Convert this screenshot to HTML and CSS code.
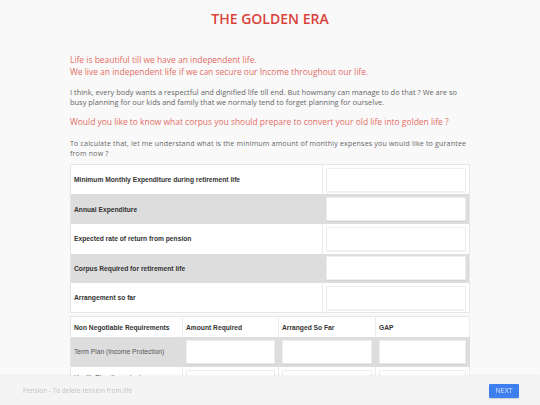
FILE: index.html
```html
<!DOCTYPE html>
<html lang="en">
<head>
<meta charset="utf-8">
<title>The Golden Era</title>
<link rel="stylesheet" href="styles.css">
</head>
<body>
<main class="page">
  <h1 class="title">THE GOLDEN ERA</h1>
  <p class="lead">Life is beautiful till we have an independent life.<br>We live an independent life if we can secure our Income throughout our life.</p>
  <p class="body">I think, every body wants a respectful and dignified life till end. But howmany can manage to do that ? We are so busy planning for our kids and family that we normaly tend to forget planning for ourselve.</p>
  <p class="question">Would you like to know what corpus you should prepare to convert your old life into golden life ?</p>
  <p class="body intro">To calculate that, let me understand what is the minimum amount of monthly expenses you would like to gurantee from now ?</p>

  <table class="calc">
    <tr><th>Minimum Monthly Expenditure during retirement life</th><td><input class="field" type="text"></td></tr>
    <tr class="alt"><th>Annual Expenditure</th><td><input class="field" type="text"></td></tr>
    <tr><th>Expected rate of return from pension</th><td><input class="field" type="text"></td></tr>
    <tr class="alt"><th>Corpus Required for retirement life</th><td><input class="field" type="text"></td></tr>
    <tr><th>Arrangement so far</th><td><input class="field" type="text"></td></tr>
  </table>

  <table class="reqs">
    <tr class="head"><th>Non Negotiable Requirements</th><th>Amount Required</th><th>Arranged So Far</th><th>GAP</th></tr>
    <tr class="alt"><td class="name">Term Plan (Income Protection)</td><td><input class="field" type="text"></td><td><input class="field" type="text"></td><td><input class="field" type="text"></td></tr>
    <tr><td class="name">Health Plan (to protect your savings)</td><td><input class="field" type="text"></td><td><input class="field" type="text"></td><td><input class="field" type="text"></td></tr>
    <tr class="alt"><td class="name">Child Education Plan</td><td><input class="field" type="text"></td><td><input class="field" type="text"></td><td><input class="field" type="text"></td></tr>
  </table>
</main>

<footer class="footer">
  <span class="footer-text">Pension - To delete tension from life</span>
  <button class="next" type="button">NEXT</button>
</footer>
</body>
</html>
```

FILE: styles.css
```css
* { box-sizing: border-box; }

html, body {
  margin: 0;
  padding: 0;
  background: #f9f9f9;
  font-family: "Open Sans", "Liberation Sans", sans-serif;
}

.page {
  width: 400px;
  margin: 0 auto;
  padding-bottom: 60px;
}

.title {
  margin: 9px 0 0;
  font-size: 14px;
  line-height: 20px;
  font-weight: 600;
  color: #d9433b;
  text-align: center;
}

.lead {
  margin: 25px 0 0;
  font-size: 8.45px;
  line-height: 12px;
  font-weight: 400;
  color: #e46d66;
}

.body {
  margin: 9px 0 0;
  font-size: 7.45px;
  line-height: 10px;
  color: #666;
}

.question {
  margin: 9px 0 0;
  font-size: 8.45px;
  line-height: 12px;
  font-weight: 400;
  color: #e46d66;
}

.intro {
  margin-top: 9.5px;
  font-size: 7.05px;
  letter-spacing: 0.18px;
  line-height: 10.5px;
}

table {
  width: 400px;
  border-collapse: collapse;
  background: #fff;
  font-family: "Liberation Sans", Arial, sans-serif;
  font-size: 6.7px;
  color: #333;
}

.calc {
  margin-top: 5.5px;
  border: 1px solid #e6e6e6;
}

.calc th {
  width: 252px;
  height: 29.7px;
  padding: 0 3px;
  text-align: left;
  font-weight: 700;
  border-right: 1px solid #ececec;
}

.calc td {
  padding: 0 3px;
}

.alt th, .alt td { background: #dddddd; }
.calc .alt th { border-right-color: #dddddd; }

.field {
  display: block;
  width: 100%;
  height: 24px;
  margin: 0;
  border: 1px solid #eeeeee;
  border-radius: 1px;
  background: #fff;
  box-shadow: 0 1px 1px rgba(0,0,0,0.06);
  outline: none;
}

.reqs {
  margin-top: 3px;
  border: 1px solid #e6e6e6;
  table-layout: fixed;
}

.reqs th, .reqs td {
  border-right: 1px solid #ececec;
}
.reqs .alt th, .reqs .alt td { border-right-color: #dddddd; }

.reqs .head th {
  height: 20px;
  padding: 0 3px;
  text-align: left;
  font-weight: 700;
  color: #333;
}
.reqs .head th:nth-child(1) { width: 112px; }
.reqs .head th:nth-child(2) { width: 96px; }
.reqs .head th:nth-child(3) { width: 97px; }

.reqs td {
  height: 30px;
  padding: 0 3px;
}

.reqs td.name {
  padding: 0 3px;
  color: #555;
  line-height: 9px;
}

.footer {
  position: fixed;
  left: 0;
  right: 0;
  bottom: 0;
  height: 29px;
  display: flex;
  align-items: center;
  justify-content: space-between;
  padding: 0 21px 0 23px;
  background: #f4f4f4;
  box-shadow: 0 -1px 2px rgba(0,0,0,0.05);
}

.footer-text {
  font-family: "Open Sans", sans-serif;
  font-size: 6.5px;
  color: #c2c2c2;
}

.next {
  width: 30px;
  height: 14px;
  padding: 0;
  border: none;
  border-radius: 1px;
  background: #3d7fee;
  color: #dde8ff;
  font-family: "Open Sans", sans-serif;
  font-size: 7px;
  box-shadow: 0 1px 1px rgba(0,0,0,0.15);
}
```
